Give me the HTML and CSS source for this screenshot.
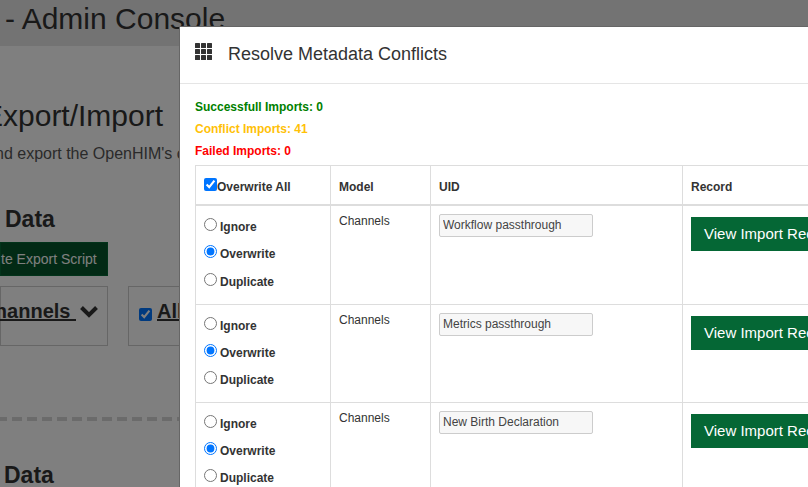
FILE: index.html
```html
<!DOCTYPE html>
<html lang="en">
<head>
    <meta charset="UTF-8">
    <title>OpenHIM - Admin Console</title>
    <link rel="stylesheet" href="styles.css">
</head>
<body>

    <!-- Page behind the dialog -->
    <div class="page">
        <div class="topbar"><span class="topbar-title">- Admin Console</span></div>
        <h1 class="page-title">Export/Import</h1>
        <p class="page-sub">nd export the OpenHIM's configuration</p>

        <h2 class="section-title">Data</h2>
        <button class="export-btn">te Export Script</button>
        <div class="filter-row">
            <div class="filter-box filter-first">
                <span class="filter-label">hannels </span>
                <svg class="chevron" viewBox="0 0 18 13"><path d="M1.5 2.5 L9 10 L16.5 2.5" fill="none" stroke="currentColor" stroke-width="4"/></svg>
            </div>
            <div class="filter-box filter-second">
                <input type="checkbox" class="filter-check" checked>
                <span class="filter-label">All</span>
            </div>
        </div>
        <div class="dash-line"></div>
        <h2 class="section-title section-import">Data</h2>
    </div>

    <div class="overlay"></div>

    <!-- Resolve conflicts dialog -->
    <div class="modal">
        <div class="modal-header">
            <svg class="grid-icon" viewBox="0 0 17 17">
                <rect x="0" y="0" width="5" height="5" rx="0.5"/><rect x="6" y="0" width="5" height="5" rx="0.5"/><rect x="12" y="0" width="5" height="5" rx="0.5"/>
                <rect x="0" y="6" width="5" height="5" rx="0.5"/><rect x="6" y="6" width="5" height="5" rx="0.5"/><rect x="12" y="6" width="5" height="5" rx="0.5"/>
                <rect x="0" y="12" width="5" height="5" rx="0.5"/><rect x="6" y="12" width="5" height="5" rx="0.5"/><rect x="12" y="12" width="5" height="5" rx="0.5"/>
            </svg>
            <span class="modal-title">Resolve Metadata Conflicts</span>
        </div>
        <div class="modal-body">
            <p class="stat stat-ok">Successfull Imports: 0</p>
            <p class="stat stat-conflict">Conflict Imports: 41</p>
            <p class="stat stat-failed">Failed Imports: 0</p>

            <table class="conflicts">
                <thead>
                    <tr>
                        <th class="col-action"><input type="checkbox" class="all-check" checked>Overwrite All</th>
                        <th class="col-model">Model</th>
                        <th class="col-uid">UID</th>
                        <th class="col-record">Record</th>
                    </tr>
                </thead>
                <tbody>
                    <tr>
                        <td class="choices">
                            <label class="choice"><input type="radio" name="r1">Ignore</label>
                            <label class="choice"><input type="radio" name="r1" checked>Overwrite</label>
                            <label class="choice"><input type="radio" name="r1">Duplicate</label>
                        </td>
                        <td>Channels</td>
                        <td><input type="text" class="uid-input" value="Workflow passthrough"></td>
                        <td><button class="view-btn">View Import Record</button></td>
                    </tr>
                    <tr>
                        <td class="choices">
                            <label class="choice"><input type="radio" name="r2">Ignore</label>
                            <label class="choice"><input type="radio" name="r2" checked>Overwrite</label>
                            <label class="choice"><input type="radio" name="r2">Duplicate</label>
                        </td>
                        <td>Channels</td>
                        <td><input type="text" class="uid-input" value="Metrics passthrough"></td>
                        <td><button class="view-btn">View Import Record</button></td>
                    </tr>
                    <tr>
                        <td class="choices">
                            <label class="choice"><input type="radio" name="r3">Ignore</label>
                            <label class="choice"><input type="radio" name="r3" checked>Overwrite</label>
                            <label class="choice"><input type="radio" name="r3">Duplicate</label>
                        </td>
                        <td>Channels</td>
                        <td><input type="text" class="uid-input" value="New Birth Declaration"></td>
                        <td><button class="view-btn">View Import Record</button></td>
                    </tr>
                </tbody>
            </table>
        </div>
    </div>

</body>
</html>
```

FILE: styles.css
```css
/* General reset */
* {
    margin: 0;
    padding: 0;
    box-sizing: border-box;
}

html, body {
    height: 100%;
    overflow: hidden;
}

body {
    font-family: "Liberation Sans", Arial, sans-serif;
    background-color: #FFFFFF;
    color: #333333;
}

/* Page behind the dialog */
.page {
    height: 487px;
    overflow: hidden;
    white-space: nowrap;
}

.topbar {
    height: 46px;
    padding: 1px 0 0 5px;
    background-color: #E7E7E7;
}

.topbar-title {
    font-size: 30px;
    line-height: 36px;
}

.page-title {
    margin: 52px 0 0 -17px;
    font-size: 30px;
    line-height: 36px;
    font-weight: 400;
}

.page-sub {
    margin: 11px 0 0 -5px;
    font-size: 16px;
    line-height: 18px;
    color: #555555;
}

.section-title {
    margin: 43px 0 0 5px;
    font-size: 23px;
    line-height: 26px;
    font-weight: 700;
}

.export-btn {
    display: block;
    width: 108px;
    height: 34px;
    margin-top: 10px;
    padding-right: 13px;
    border: 1px solid #056735;
    background-color: #04552B;
    color: #FFFFFF;
    font-family: inherit;
    font-size: 14px;
    text-align: right;
}

.filter-row {
    display: flex;
    gap: 20px;
    margin-top: 10px;
}

.filter-box {
    height: 60px;
    border: 1px solid #CCCCCC;
    padding-top: 11px;
    display: flex;
    align-items: flex-start;
}

.filter-first {
    width: 108px;
    justify-content: flex-end;
    padding-right: 9px;
}

.filter-second {
    width: 200px;
    padding-left: 10px;
}

.filter-label {
    font-size: 20px;
    line-height: 26px;
    font-weight: 700;
    text-decoration: underline;
    white-space: pre;
    flex-shrink: 0;
}

.chevron {
    flex-shrink: 0;
    width: 18px;
    height: 13px;
    margin: 7px 0 0 4px;
}

.filter-check {
    width: 13px;
    height: 13px;
    margin: 10px 5px 0 0;
}

.dash-line {
    margin-top: 71px;
    height: 4px;
    background: linear-gradient(90deg, #D6D6D6 10px, transparent 10px) -3px 0 / 15px 100%;
}

.section-import {
    margin-top: 41px;
    margin-left: 4px;
}

/* Dark layer over the page */
.overlay {
    position: fixed;
    inset: 0;
    background-color: rgba(0, 0, 0, 0.5);
}

/* Dialog */
.modal {
    position: fixed;
    top: 26px;
    left: 179px;
    width: 900px;
    height: 600px;
    background-color: #FFFFFF;
    border: 1px solid #666666;
}

.modal-header {
    display: flex;
    align-items: center;
    height: 57px;
    padding-left: 15px;
    border-bottom: 1px solid #E5E5E5;
}

.grid-icon {
    width: 17px;
    height: 17px;
    margin-top: -7px;
    fill: #333333;
}

.modal-title {
    margin: -2px 0 0 16px;
    font-size: 18px;
    color: #333333;
}

.modal-body {
    padding: 12px 0 0 15px;
}

.stat {
    font-size: 12px;
    line-height: 22px;
    font-weight: 700;
}

.stat-ok {
    color: #008000;
}

.stat-conflict {
    color: #FFC107;
}

.stat-failed {
    color: #FF0000;
}

/* Conflicts table */
.conflicts {
    margin-top: 3px;
    table-layout: fixed;
    width: 720px;
    border-collapse: collapse;
    font-size: 12px;
}

.conflicts th, .conflicts td {
    border: 1px solid #DDDDDD;
    padding: 8px;
    text-align: left;
    vertical-align: top;
}

.conflicts th {
    height: 39px;
    padding-top: 14px;
    border-bottom-width: 2px;
    font-weight: 700;
    line-height: 14px;
}

.conflicts th.col-action {
    padding-top: 12px;
}

.col-action { width: 135px; }
.col-model { width: 100px; }
.col-uid { width: 252px; }
.col-record { width: 233px; }

.conflicts td {
    line-height: 14px;
}

/* First row is one pixel taller, the gap falls before its last choice */
.conflicts tbody tr:first-child .choice:last-child {
    margin-top: 1px;
}

.all-check {
    width: 13px;
    height: 13px;
    vertical-align: 0;
    margin: 0;
}

.choice {
    display: flex;
    align-items: center;
    height: 27px;
    font-weight: 700;
}

.choice input {
    width: 13px;
    height: 13px;
    margin: -5px 3px 0 0;
}

.uid-input {
    display: block;
    width: 154px;
    height: 23px;
    padding: 0 3px 1px;
    border: 1px solid #CCCCCC;
    border-radius: 2px;
    background-color: #F7F7F7;
    color: #444444;
    font-family: inherit;
    font-size: 12px;
}

.view-btn {
    display: block;
    margin-top: 3px;
    width: 160px;
    height: 34px;
    padding: 0 0 1px 13px;
    border: none;
    background-color: #056735;
    color: #FFFFFF;
    font-family: inherit;
    font-size: 15px;
    text-align: left;
    white-space: nowrap;
}
```
